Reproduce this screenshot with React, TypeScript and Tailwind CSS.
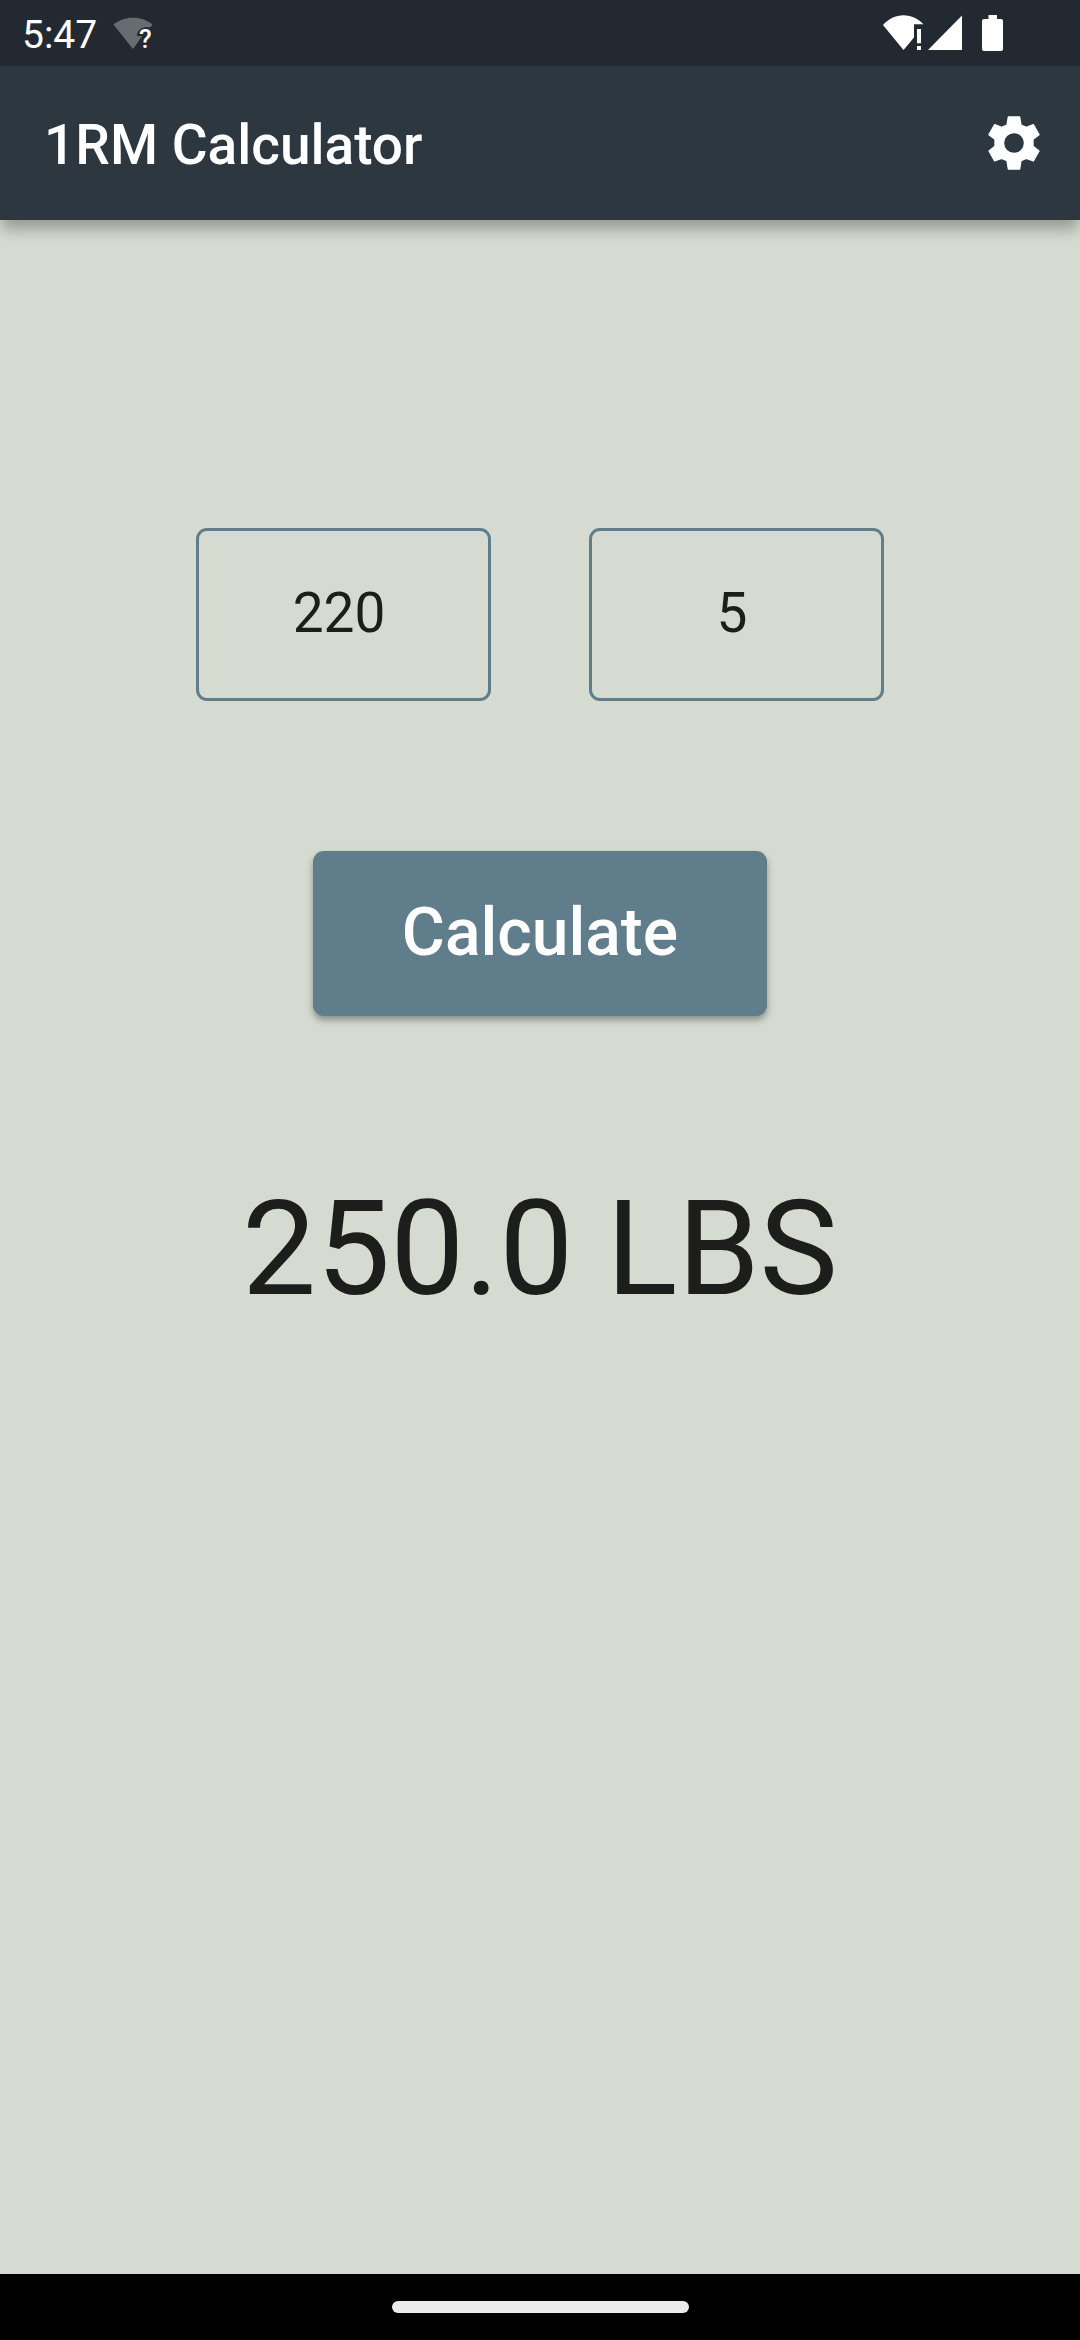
import React from "react";

type FieldP = {
	label: string;
	value: string;
};

const Field = ({ label, value }: FieldP) => (
	<input
		aria-label={label}
		inputMode="numeric"
		defaultValue={value}
		className="h-[173px] w-[295px] rounded-[11px] border-[3px] border-[#607d8b] bg-transparent pb-[4px] pr-[9px] text-center text-[55px] text-[#1d1e1c] outline-none"
	/>
);

const StatusBar = () => (
	<div className="flex h-[66px] items-center justify-between bg-[#232930] pl-[22px] pr-[77px] text-white">
		<div className="flex items-center pt-[2px]">
			<span className="pt-[2px] text-[39px] leading-[62px]">5:47</span>
			{/* wifi, unknown network */}
			<svg className="ml-[16px]" width="42" height="40" viewBox="0 -3 42 40">
				<path d="M.4 7.6C5.8 3.2 12.5.7 20 .7s14.2 2.5 19.6 6.9l-2.4 2.9c-6.2-2-13.2 2-13.2 8.5h5.2L20 32z" fill="#676c70" />
				<text x="26" y="31" fontSize="26" fontWeight="500" fill="#fff" fontFamily="Roboto, sans-serif">?</text>
			</svg>
		</div>
		<div className="flex items-center">
			{/* wifi with warning */}
			<svg width="41" height="36" viewBox="0 0 41 36">
				<path d="M0 10C5.5 4 12.5.3 20.5.3S35.5 4 40.3 9.2H31v13.2L20.5 35z" fill="#fff" />
				<path d="M34 14h4v14.3h-4zM34 31h4v4h-4z" fill="#fff" />
			</svg>
			<svg className="ml-[4px]" width="34" height="36" viewBox="0 0 34 36">
				<path d="M34 .5V35H0z" fill="#fff" />
			</svg>
			<svg className="ml-[20px]" width="21" height="36" viewBox="0 0 21 36">
				<path d="M6.5 0H15v4h4a2 2 0 0 1 2 2v28a2 2 0 0 1-2 2H2a2 2 0 0 1-2-2V6a2 2 0 0 1 2-2h4.5z" fill="#fff" />
			</svg>
		</div>
	</div>
);

const AppBar = () => (
	<header className="flex h-[154px] items-center justify-between bg-[#2d373f] pl-[44px] pr-[33px] text-white shadow-[0_11px_14px_-2px_rgba(0,0,0,0.3)]">
		<h1 className="pt-[3px] text-[55px] font-medium leading-[64px]">1RM Calculator</h1>
		<button aria-label="Settings">
			<svg width="66" height="66" viewBox="-99 -99 198 198" fill="currentColor" stroke="currentColor" strokeWidth="4" strokeLinejoin="round">
				<path
					fillRule="evenodd"
					d="M-17-78H17L21-54L37-47L58-55L75-25L57-11V10L75 24L58 54L37 46L21 53L17 78H-17L-21 53L-37 46L-58 54L-75 24L-57 10V-11L-75-25L-58-55L-37-47L-21-54zM0-31.5a31.5 31.5 0 1 0 0 63a31.5 31.5 0 1 0 0-63z"
				/>
			</svg>
		</button>
	</header>
);

export default function App() {
	return (
		<div className="flex h-[2340px] w-[1080px] flex-col bg-[#d5dbd0] font-[Roboto,sans-serif]">
			<StatusBar />
			<AppBar />
			<main className="flex flex-1 flex-col items-center pt-[308px]">
				<div className="flex gap-[98px]">
					<Field label="Weight" value="220" />
					<Field label="Reps" value="5" />
				</div>
				<button className="mt-[150px] h-[165px] w-[454px] rounded-[11px] bg-[#607d8b] pb-[2px] text-[66px] font-medium text-white shadow-[0_4px_7px_rgba(0,0,0,0.35)]">
					Calculate
				</button>
				<p className="mt-[156px] text-[132px] leading-[155px] text-[#1d1e1c]">250.0 LBS</p>
			</main>
			<footer className="flex h-[66px] items-center justify-center bg-black">
				<div className="h-[12px] w-[297px] rounded-full bg-[#ebebeb]" />
			</footer>
		</div>
	);
}
